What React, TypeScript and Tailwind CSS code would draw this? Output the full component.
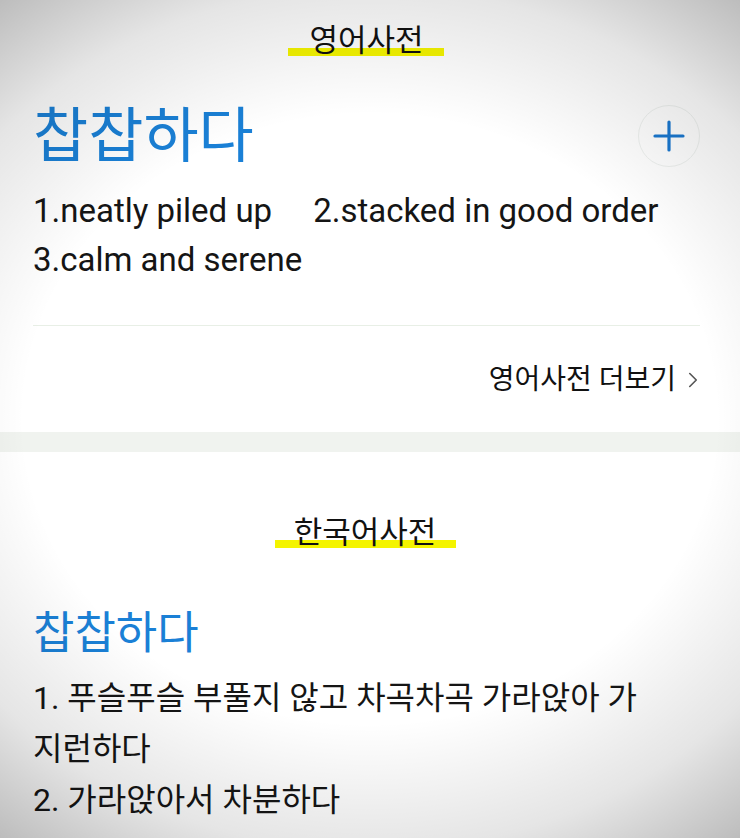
import { Plus, ChevronRight } from 'lucide-react';

const FONT = "font-['Roboto','Noto_Sans_CJK_KR',sans-serif]";

function SectionTitle({ label, barClass, shiftClass = '' }: { label: string; barClass: string; shiftClass?: string }) {
  return (
    <div className={`flex justify-center ${shiftClass}`}>
      <div className="relative">
        <span className={`absolute bottom-[7px] h-[8px] bg-[#f4f400] ${barClass}`} />
        <span className="relative text-[31px] leading-[44px] text-[#111]">{label}</span>
      </div>
    </div>
  );
}

export default function App() {
  return (
    <div className={`relative h-[838px] w-[740px] overflow-hidden bg-white ${FONT}`}>
      {/* English dictionary */}
      <div className="pl-[33px] pr-[40px] pt-[19px]">
        <SectionTitle label="영어사전" barClass="-left-[21px] -right-[20px]" />
        <div className="mt-[39px] flex items-start justify-between">
          <h1 className="text-[60px] leading-[70px] text-[#1a80d6]">찹찹하다</h1>
          <button
            type="button"
            className="mt-[3px] flex h-[62px] w-[62px] items-center justify-center rounded-full border border-[#eef1ef] text-[#1a78d0]"
          >
            <Plus size={48} strokeWidth={1.6} />
          </button>
        </div>
        <div className="mt-[14px] text-[33px] leading-[49px] text-[#151515]">
          <span className="mr-[41px]">1.neatly piled up</span>
          <span>2.stacked in good order</span>
          <br />
          <span>3.calm and serene</span>
        </div>
        <div className="mt-[41px] border-t border-[#e8efe6]" />
        <div className="flex items-center justify-end pt-[36px] pb-[34px] text-[28px] leading-[36px] text-[#111]">
          영어사전 더보기
          <ChevronRight size={26} strokeWidth={1.5} className="ml-[4px] mr-[-6px] text-[#555]" />
        </div>
      </div>

      <div className="h-[20px] bg-[#f0f3ef]" />

      {/* Korean dictionary */}
      <div className="pl-[33px] pr-[33px] pt-[59px]">
        <SectionTitle label="한국어사전" barClass="-left-[19px] -right-[20px]" shiftClass="pr-[10px]" />
        <h2 className="mt-[51px] text-[45px] leading-[56px] text-[#1a80d6]">찹찹하다</h2>
        <div className="mt-[11px] break-keep text-[32px] leading-[51px] text-[#151515]">
          <p>1. 푸슬푸슬 부풀지 않고 차곡차곡 가라앉아 가 지런하다</p>
          <p>2. 가라앉아서 차분하다</p>
        </div>
      </div>

      {/* photo vignette */}
      <div className="pointer-events-none absolute inset-0 bg-[radial-gradient(ellipse_85%_66%_at_50%_50%,rgba(0,0,0,0)_55%,rgba(0,0,0,0.1)_78%,rgba(0,0,0,0.34)_105%)]" />
    </div>
  );
}
